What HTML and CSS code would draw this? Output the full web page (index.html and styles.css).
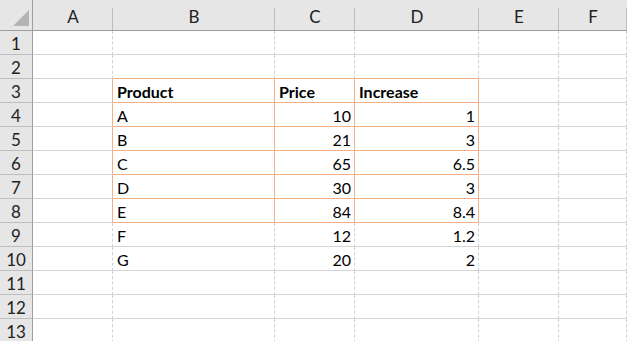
FILE: index.html
```html
<!DOCTYPE html>
<html lang="en">
<head>
    <meta charset="UTF-8">
    <title>Sheet1</title>
    <link rel="stylesheet" href="styles.css">
</head>
<body>
    <div class="sheet">
        <!-- Column headers -->
        <div class="row">
            <div class="corner">
                <svg width="16" height="16" viewBox="0 0 16 16"><polygon points="16,0 16,16 0,16" fill="#b4b4b4"/></svg>
            </div>
            <div class="col-head">A</div>
            <div class="col-head">B</div>
            <div class="col-head">C</div>
            <div class="col-head">D</div>
            <div class="col-head">E</div>
            <div class="col-head">F</div>
        </div>

        <div class="row">
            <div class="row-head">1</div>
            <div class="cell"></div><div class="cell"></div><div class="cell"></div><div class="cell"></div><div class="cell"></div><div class="cell"></div>
        </div>
        <div class="row">
            <div class="row-head">2</div>
            <div class="cell"></div><div class="cell top-edge"></div><div class="cell top-edge"></div><div class="cell top-edge"></div><div class="cell"></div><div class="cell"></div>
        </div>

        <!-- Bordered table B3:D8 -->
        <div class="row">
            <div class="row-head">3</div>
            <div class="cell left-edge"></div>
            <div class="cell boxed bold">Product</div>
            <div class="cell boxed bold">Price</div>
            <div class="cell boxed bold">Increase</div>
            <div class="cell"></div><div class="cell"></div>
        </div>
        <div class="row">
            <div class="row-head">4</div>
            <div class="cell left-edge"></div>
            <div class="cell boxed">A</div>
            <div class="cell boxed num">10</div>
            <div class="cell boxed num">1</div>
            <div class="cell"></div><div class="cell"></div>
        </div>
        <div class="row">
            <div class="row-head">5</div>
            <div class="cell left-edge"></div>
            <div class="cell boxed">B</div>
            <div class="cell boxed num">21</div>
            <div class="cell boxed num">3</div>
            <div class="cell"></div><div class="cell"></div>
        </div>
        <div class="row">
            <div class="row-head">6</div>
            <div class="cell left-edge"></div>
            <div class="cell boxed">C</div>
            <div class="cell boxed num">65</div>
            <div class="cell boxed num">6.5</div>
            <div class="cell"></div><div class="cell"></div>
        </div>
        <div class="row">
            <div class="row-head">7</div>
            <div class="cell left-edge"></div>
            <div class="cell boxed">D</div>
            <div class="cell boxed num">30</div>
            <div class="cell boxed num">3</div>
            <div class="cell"></div><div class="cell"></div>
        </div>
        <div class="row">
            <div class="row-head">8</div>
            <div class="cell left-edge"></div>
            <div class="cell boxed">E</div>
            <div class="cell boxed num">84</div>
            <div class="cell boxed num">8.4</div>
            <div class="cell"></div><div class="cell"></div>
        </div>

        <div class="row">
            <div class="row-head">9</div>
            <div class="cell"></div>
            <div class="cell">F</div>
            <div class="cell num">12</div>
            <div class="cell num">1.2</div>
            <div class="cell"></div><div class="cell"></div>
        </div>
        <div class="row">
            <div class="row-head">10</div>
            <div class="cell"></div>
            <div class="cell">G</div>
            <div class="cell num">20</div>
            <div class="cell num">2</div>
            <div class="cell"></div><div class="cell"></div>
        </div>
        <div class="row">
            <div class="row-head">11</div>
            <div class="cell"></div><div class="cell"></div><div class="cell"></div><div class="cell"></div><div class="cell"></div><div class="cell"></div>
        </div>
        <div class="row">
            <div class="row-head">12</div>
            <div class="cell"></div><div class="cell"></div><div class="cell"></div><div class="cell"></div><div class="cell"></div><div class="cell"></div>
        </div>
        <div class="row">
            <div class="row-head">13</div>
            <div class="cell"></div><div class="cell"></div><div class="cell"></div><div class="cell"></div><div class="cell"></div><div class="cell"></div>
        </div>
    </div>
</body>
</html>
```

FILE: styles.css
```css
/* Global */
body {
    margin: 0;
    background-color: #fff;
    font-family: 'Lato', 'Open Sans', sans-serif;
    font-size: 16px;
    color: #000;
    overflow: hidden;
}

/* Sheet grid */
.sheet {
    display: grid;
    grid-template-columns: 33px 80px 162px 80px 124px 80px 1fr;
    grid-template-rows: 31px repeat(13, 24px);
    width: 627px;
}
.row {
    display: contents;
}

/* Headers */
.corner {
    background-color: #e6e6e6;
    border-right: 1px solid #9e9e9e;
    border-bottom: 1px solid #9e9e9e;
    display: flex;
    align-items: flex-end;
    justify-content: flex-end;
    padding: 0 3px 4px 0;
    box-sizing: border-box;
}
.corner svg {
    display: block;
}
.col-head {
    background-color: #e6e6e6;
    border-bottom: 1px solid #9e9e9e;
    background-image: linear-gradient(#bdbdbd, #bdbdbd);
    background-size: 1px 22px;
    background-position: right bottom;
    background-repeat: no-repeat;
    display: flex;
    align-items: center;
    justify-content: center;
    padding-top: 3px;
    box-sizing: border-box;
    color: #222;
    font-size: 17px;
}
.row-head {
    background-color: #e6e6e6;
    border-right: 1px solid #9e9e9e;
    border-bottom: 1px solid #bdbdbd;
    display: flex;
    align-items: center;
    justify-content: center;
    padding-top: 2px;
    box-sizing: border-box;
    color: #222;
    font-size: 17px;
}

/* Cells */
.cell {
    border-right: 1px dashed #d0d0d0;
    border-bottom: 1px solid #d4d4d4;
    box-sizing: border-box;
    padding: 2px 4px 0 4px;
    display: flex;
    align-items: center;
    white-space: nowrap;
}
.cell.num {
    justify-content: flex-end;
    padding-right: 3px;
}
.cell.bold {
    font-weight: bold;
}
.cell.boxed {
    border-right: 1px solid #f4b084;
    border-bottom: 1px solid #f4b084;
}
.cell.top-edge {
    border-bottom: 1px solid #f4b084;
}
.cell.left-edge {
    border-right: 1px solid #f4b084;
}
```
